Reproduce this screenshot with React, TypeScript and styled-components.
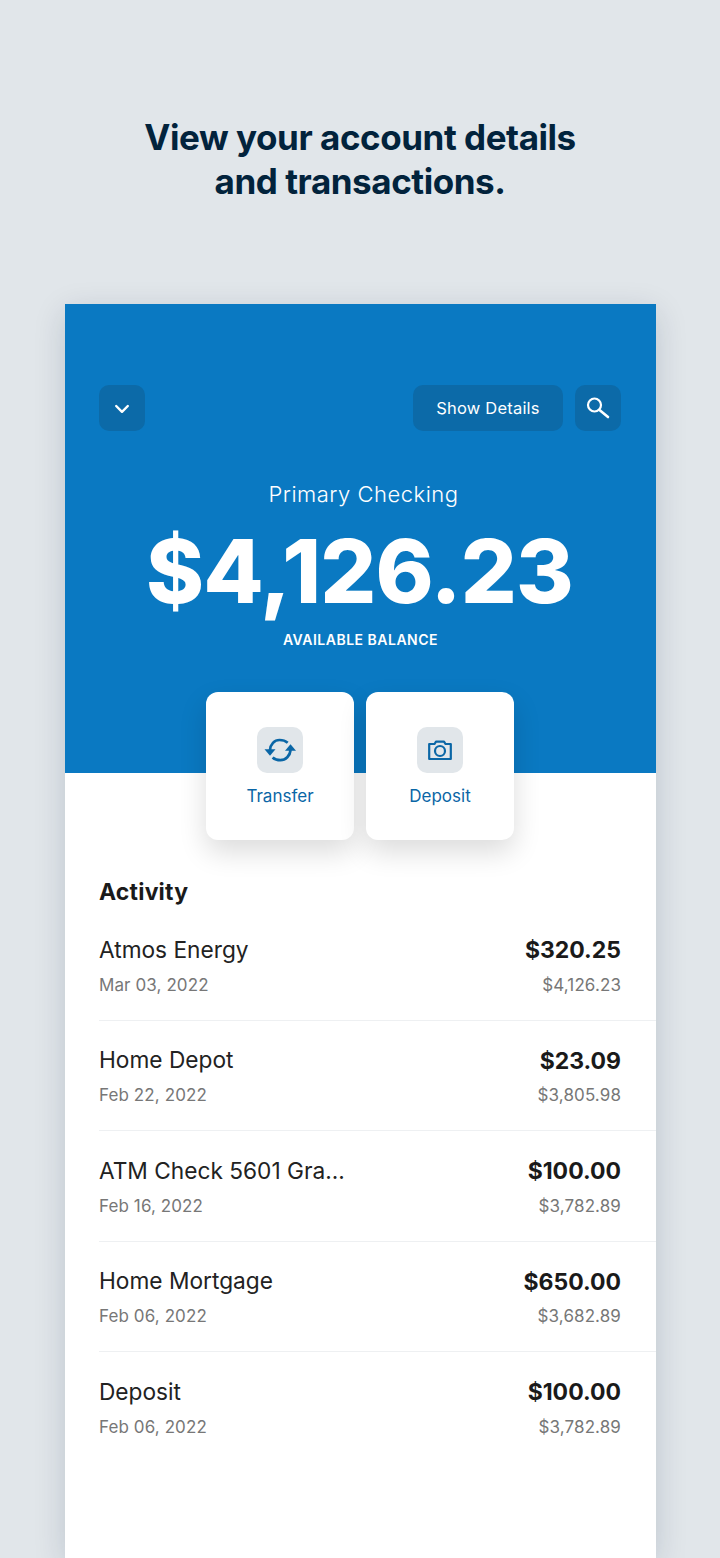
import React from 'react';
import styled, { createGlobalStyle } from 'styled-components';

const GlobalStyle = createGlobalStyle`
  html, body {
    margin: 0;
    padding: 0;
    background: #e1e6ea;
    font-family: Inter, "Liberation Sans", sans-serif;
  }
`;

const transactions = [
  { name: 'Atmos Energy', date: 'Mar 03, 2022', amount: '$320.25', balance: '$4,126.23' },
  { name: 'Home Depot', date: 'Feb 22, 2022', amount: '$23.09', balance: '$3,805.98' },
  { name: 'ATM Check 5601 Gra...', date: 'Feb 16, 2022', amount: '$100.00', balance: '$3,782.89' },
  { name: 'Home Mortgage', date: 'Feb 06, 2022', amount: '$650.00', balance: '$3,682.89' },
  { name: 'Deposit', date: 'Feb 06, 2022', amount: '$100.00', balance: '$3,782.89' },
];

const TransferIcon = () => (
  <svg width="32" height="32" viewBox="0 0 32 32" fill="none">
    <path d="M6 16C6.4 10.400 10.400 6 15.500 6c3.200 0 6 .9 8.200 2.800" stroke="#0a66a6" strokeWidth="2.7" />
    <path d="M26.600 16C26 21.800 21.800 26.200 16.400 26.200c-3 0-5.800-1-7.800-2.800" stroke="#0a66a6" strokeWidth="2.7" />
    <path d="M.5 15.200h11L6 21.800z" fill="#0a66a6" />
    <path d="M21 16.800h11L26.500 10.200z" fill="#0a66a6" />
  </svg>
);

const CameraIcon = () => (
  <svg width="24" height="24" viewBox="0 0 24 24" fill="none" stroke="#0a66a6" strokeWidth="2.2" strokeLinejoin="round">
    <path d="M1.200 6h5.300L8 3.600h8L17.500 6h5.300v15H1.200z" />
    <circle cx="12" cy="13" r="5" />
  </svg>
);

const Chevron = () => (
  <svg width="16" height="16" viewBox="0 0 16 16" fill="none" stroke="#fff" strokeWidth="2.4" strokeLinecap="round" strokeLinejoin="round">
    <path d="M2.200 6 8 11.800 13.800 6" />
  </svg>
);

const SearchIcon = () => (
  <svg width="24" height="24" viewBox="0 0 24 24" fill="none" stroke="#fff">
    <circle cx="8.500" cy="9" r="6.500" strokeWidth="2.2" />
    <path d="M13.500 14 22 21" strokeWidth="2.6" strokeLinecap="round" />
  </svg>
);

export default function App() {
  return (
    <Page>
      <GlobalStyle />
      <Heading>
        View your account details
        <br />
        and transactions.
      </Heading>
      <Phone>
        <Hero>
          <TopBar>
            <SquareButton><Chevron /></SquareButton>
            <Spacer />
            <DetailsButton>Show Details</DetailsButton>
            <SquareButton><SearchIcon /></SquareButton>
          </TopBar>
          <AccountName>Primary Checking</AccountName>
          <Balance>$4,126.23</Balance>
          <BalanceLabel>AVAILABLE BALANCE</BalanceLabel>
        </Hero>
        <Actions>
          <ActionCard>
            <ActionIcon><TransferIcon /></ActionIcon>
            <ActionLabel>Transfer</ActionLabel>
          </ActionCard>
          <ActionCard>
            <ActionIcon><CameraIcon /></ActionIcon>
            <ActionLabel>Deposit</ActionLabel>
          </ActionCard>
        </Actions>
        <Activity>
          <ActivityTitle>Activity</ActivityTitle>
          {transactions.map((t, i) => (
            <Row key={i}>
              <RowLine>
                <Name>{t.name}</Name>
                <Amount>{t.amount}</Amount>
              </RowLine>
              <RowLine>
                <Small>{t.date}</Small>
                <Small>{t.balance}</Small>
              </RowLine>
            </Row>
          ))}
        </Activity>
      </Phone>
    </Page>
  );
}

const Page = styled.div`
  width: 720px;
  height: 1558px;
  overflow: hidden;
  padding-top: 115px;
  box-sizing: border-box;
`;

const Heading = styled.h1`
  margin: 0;
  text-align: center;
  font-size: 35px;
  line-height: 44px;
  font-weight: 700;
  letter-spacing: -0.45px;
  color: #02233c;
`;

const Phone = styled.div`
  width: 591px;
  height: 1254px;
  margin: 101px 0 0 65px;
  background: #fff;
  box-shadow: 0 8px 30px rgba(0, 30, 60, 0.16);
`;

const Hero = styled.div`
  height: 469px;
  box-sizing: border-box;
  padding-top: 81px;
  background: #0a79c2;
  color: #fff;
  text-align: center;
`;

const TopBar = styled.div`
  display: flex;
  gap: 12px;
  padding: 0 35px 0 34px;
`;

const Spacer = styled.div`
  flex: 1;
`;

const SquareButton = styled.div`
  width: 46px;
  height: 46px;
  border-radius: 10px;
  background: #0c6aa8;
  display: flex;
  align-items: center;
  justify-content: center;
`;

const DetailsButton = styled(SquareButton)`
  width: 150px;
  font-size: 16.5px;
  letter-spacing: 0.2px;
`;

const AccountName = styled.div`
  margin: 49px 0 0 6px;
  font-size: 22px;
  line-height: 28px;
  font-weight: 300;
  letter-spacing: 0.5px;
`;

const Balance = styled.div`
  margin-top: 15px;
  padding-right: 2px;
  font-size: 88px;
  line-height: 96px;
  font-weight: 800;
  letter-spacing: -0.8px;
`;

const BalanceLabel = styled.div`
  margin-top: 12px;
  font-size: 14px;
  line-height: 18px;
  font-weight: 600;
  letter-spacing: 0.5px;
`;

const Actions = styled.div`
  display: flex;
  justify-content: center;
  gap: 12px;
  margin: -81px 1px 0 0;
`;

const ActionCard = styled.div`
  width: 148px;
  height: 148px;
  border-radius: 12px;
  background: #fff;
  box-shadow: 0 12px 28px rgba(0, 0, 0, 0.14);
  display: flex;
  flex-direction: column;
  align-items: center;
  padding-top: 35px;
  box-sizing: border-box;
`;

const ActionIcon = styled.div`
  width: 46px;
  height: 46px;
  border-radius: 10px;
  background: #e1e6ea;
  display: flex;
  align-items: center;
  justify-content: center;
`;

const ActionLabel = styled.div`
  margin-top: 13px;
  font-size: 17px;
  line-height: 20px;
  color: #0a66a6;
`;

const Activity = styled.div`
  padding: 39px 0 0 34px;
`;

const ActivityTitle = styled.div`
  font-size: 23px;
  line-height: 26px;
  font-weight: 700;
  letter-spacing: 0.2px;
  color: #1a1a1a;
  margin-bottom: 5px;
`;

const Row = styled.div`
  height: 110.5px;
  box-sizing: border-box;
  padding: 23px 35px 0 0;
  border-bottom: 1px solid #eef0f2;
  &:last-child {
    border-bottom: none;
  }
`;

const RowLine = styled.div`
  display: flex;
  justify-content: space-between;
  align-items: center;
  height: 34px;
`;

const Name = styled.div`
  padding-bottom: 2px;
  font-size: 22.7px;
  color: #222;
`;

const Amount = styled.div`
  font-size: 23px;
  font-weight: 700;
  color: #1a1a1a;
`;

const Small = styled.div`
  padding-top: 1px;
  font-size: 17px;
  letter-spacing: 0.1px;
  color: #777;
`;
